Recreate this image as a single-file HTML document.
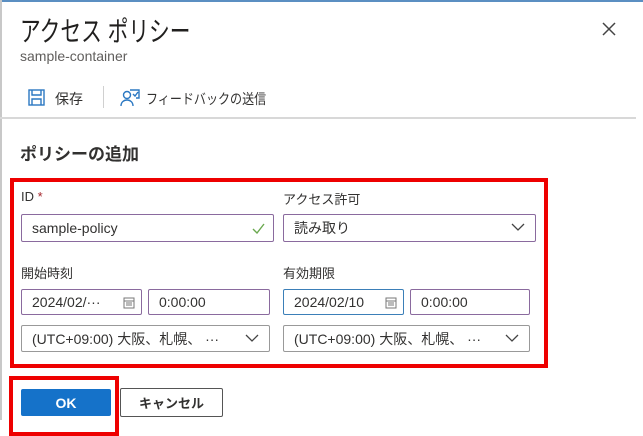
<!DOCTYPE html>
<html><head><meta charset="utf-8"><style>
*{box-sizing:border-box;margin:0;padding:0}
body{width:643px;height:431px;overflow:hidden;background:#fff;font-family:"Liberation Sans","Noto Sans CJK JP",sans-serif;color:#323130;position:relative}
.a{position:absolute}
.inp{position:absolute;border:1.5px solid #8a6a9e;border-radius:2px;font-size:14px;color:#323130;padding-left:10px;display:flex;align-items:center;background:#fff}
.lbl{position:absolute;font-size:13px;color:#323130}
.chev{position:absolute;right:10px;top:8px}
</style></head><body>
<div class="a" style="left:0;top:0;width:643px;height:2px;background:#5b8fc2"></div>
<div class="a" style="left:0;top:0;width:2px;height:420px;background:#c8c8c8"></div>
<div class="a" style="left:20px;top:10px;font-size:28px;color:#201f1e;transform:scaleX(0.74);transform-origin:left;white-space:nowrap">アクセス ポリシー</div>
<div class="a" style="left:20px;top:48px;font-size:14px;color:#605e5c">sample-container</div>
<svg class="a" style="left:600px;top:20px" width="18" height="18" viewBox="0 0 18 18"><path d="M3 3L15 15M15 3L3 15" stroke="#444" stroke-width="1.5"/></svg>
<svg class="a" style="left:28px;top:89px" width="17" height="17" viewBox="0 0 17 17" fill="none" stroke="#2b78c2" stroke-width="1.4"><rect x="1" y="1" width="15" height="15"/><path d="M4 1v5h9V1M4 16v-6h9v6"/></svg>
<div class="a" style="left:55px;top:89px;font-size:14px">保存</div>
<div class="a" style="left:103px;top:86px;width:1px;height:22px;background:#d0d0d0"></div>
<svg class="a" style="left:120px;top:88px" width="20" height="19" viewBox="0 0 20 19" fill="none" stroke="#2b78c2" stroke-width="1.4"><circle cx="7" cy="7" r="3.5"/><path d="M1 18c0-4 3-6 6-6s6 2 6 6M10 2h9v8h-3M13 6l2 2 3-4"/></svg>
<div class="a" style="left:146px;top:89px;font-size:14px;transform:scaleX(0.86);transform-origin:left;white-space:nowrap">フィードバックの送信</div>
<div class="a" style="left:0;top:117px;width:636px;height:2px;background:#d8d8d8"></div>
<div class="a" style="left:20px;top:140px;font-size:17px;font-weight:bold;color:#323130">ポリシーの追加</div>
<div class="a" style="left:10px;top:178px;width:538px;height:190px;border:4px solid #ee0000"></div>
<div class="lbl" style="left:21px;top:189px">ID <span style="color:#a4262c">*</span></div>
<div class="inp" style="left:21px;top:214px;width:253px;height:28px">sample-policy<svg class="a" style="right:8px;top:8px" width="13" height="11"><path d="M1 6l4 4 7-9" stroke="#6aa84f" stroke-width="1.4" fill="none"/></svg></div>
<div class="lbl" style="left:283px;top:189px">アクセス許可</div>
<div class="inp" style="left:283px;top:214px;width:253px;height:28px">読み取り<svg class="chev" width="14" height="9"><path d="M1 1l6 6 6-6" stroke="#444" stroke-width="1.3" fill="none"/></svg></div>
<div class="lbl" style="left:21px;top:263px">開始時刻</div>
<div class="inp" style="left:21px;top:289px;width:121px;height:26px">2024/02/···<svg class="a" style="right:6px;top:7px" width="12" height="12"><rect x="1" y="1" width="10" height="10" fill="none" stroke="#777"/><path d="M1 4h10M3 6h6M3 8h6" stroke="#777"/></svg></div>
<div class="inp" style="left:148px;top:289px;width:122px;height:26px">0:00:00</div>
<div class="inp" style="left:21px;top:325px;width:249px;height:27px;border-color:#999;border-width:1px">(UTC+09:00) 大阪、札幌、 ···<svg class="chev" width="14" height="9"><path d="M1 1l6 6 6-6" stroke="#444" stroke-width="1.3" fill="none"/></svg></div>
<div class="lbl" style="left:283px;top:263px">有効期限</div>
<div class="inp" style="left:283px;top:289px;width:121px;height:26px;border-color:#3b7fb8">2024/02/10<svg class="a" style="right:6px;top:7px;background:#fff" width="12" height="12"><rect x="1" y="1" width="10" height="10" fill="none" stroke="#777"/><path d="M1 4h10M3 6h6M3 8h6" stroke="#777"/></svg></div>
<div class="inp" style="left:410px;top:289px;width:120px;height:26px">0:00:00</div>
<div class="inp" style="left:283px;top:325px;width:247px;height:27px;border-color:#999;border-width:1px">(UTC+09:00) 大阪、札幌、 ···<svg class="chev" width="14" height="9"><path d="M1 1l6 6 6-6" stroke="#444" stroke-width="1.3" fill="none"/></svg></div>
<div class="a" style="left:9px;top:376px;width:110px;height:60px;border:4px solid #ee0000"></div>
<div class="a" style="left:21px;top:389px;width:90px;height:27px;background:#1572c9;border-radius:2px;color:#fff;font-weight:bold;font-size:14px;display:flex;align-items:center;justify-content:center">OK</div>
<div class="a" style="left:120px;top:388px;width:103px;height:29px;border:1px solid #555;border-radius:2px;font-size:13px;font-weight:bold;display:flex;align-items:center;justify-content:center">キャンセル</div>
</body></html>
